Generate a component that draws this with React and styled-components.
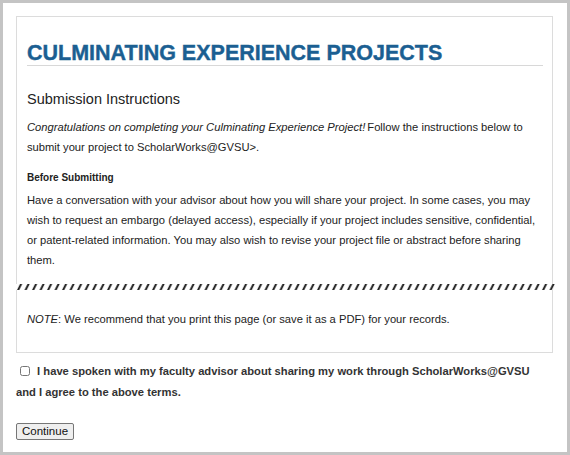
import React from 'react';
import styled, { createGlobalStyle } from 'styled-components';

const GlobalStyle = createGlobalStyle`
  html, body {
    margin: 0;
    padding: 0;
    background: #ffffff;
  }
  body {
    font-family: "Liberation Sans", Arial, sans-serif;
    color: #222;
  }
`;

const Frame = styled.div`
  box-sizing: border-box;
  width: 570px;
  height: 455px;
  border: 3px solid #c4c4c4;
  padding: 13px 0 0 13px;
  background: #fff;
`;

const Panel = styled.div`
  width: 537px;
`;

const PanelTop = styled.div`
  border: 1px solid #dcdcdc;
  border-bottom: none;
  padding: 24px 9px 14px 10px;
`;

const PanelBottom = styled.div`
  border: 1px solid #dcdcdc;
  border-top: none;
  padding: 19px 9px 23px 10px;
`;

const Heading = styled.h1`
  margin: 0;
  font-size: 21.5px;
  line-height: 24px;
  font-weight: bold;
  color: #1b5f92;
  -webkit-text-stroke: 0.4px #1b5f92;
  border-bottom: 1px solid #d8d8d8;
`;

const SubHeading = styled.h2`
  margin: 24px 0 0;
  font-size: 14.5px;
  line-height: 18px;
  font-weight: normal;
  color: #222;
`;

const Para = styled.p`
  margin: ${props => props.top || 0}px 0 0;
  font-size: 11.2px;
  line-height: 20px;
  color: #222;
`;

const Em = styled.em`
  padding-right: 2px;
`;

const SmallHead = styled.h3`
  margin: 13px 0 0;
  font-size: 10px;
  line-height: 16px;
  font-weight: bold;
  color: #222;
`;

const Tear = styled.svg`
  display: block;
  width: 539px;
  height: 6px;
`;

const Agree = styled.label`
  display: block;
  max-width: 522px;
  margin-top: 8px;
  font-size: 11.2px;
  line-height: 21px;
  font-weight: bold;
  color: #333;
`;

const Check = styled.input`
  width: 10px;
  height: 10px;
  margin: 0 4px 0 4px;
  vertical-align: -1px;
`;

const Button = styled.button`
  display: block;
  margin-top: 20px;
  height: 17px;
  padding: 0 5px;
  font-family: "Liberation Sans", Arial, sans-serif;
  font-size: 11.5px;
  line-height: 15px;
  color: #111;
  background: #efefef;
  border: 1px solid #767676;
  border-radius: 2px;
`;

function TearLine() {
  return (
    <Tear viewBox="0 0 539 6">
      <defs>
        <pattern id="dash" patternUnits="userSpaceOnUse" width="7.5" height="6">
          <polygon points="1,6 3.2,6 6.2,0 4,0" fill="#1e1e1e" />
        </pattern>
      </defs>
      <rect x="0" y="0" width="539" height="6" fill="url(#dash)" />
    </Tear>
  );
}

export default function App() {
  return (
    <>
      <GlobalStyle />
      <Frame>
        <Panel>
          <PanelTop>
            <Heading>CULMINATING EXPERIENCE PROJECTS</Heading>
            <SubHeading>Submission Instructions</SubHeading>
            <Para top={9}>
              <Em>Congratulations on completing your Culminating Experience Project!</Em>
              <span>Follow the instructions below to</span>{' '}
              <span>submit your project to ScholarWorks@GVSU&gt;.</span>
            </Para>
            <SmallHead>Before Submitting</SmallHead>
            <Para top={4}>
              Have a conversation with your advisor about how you will share your project. In
              some cases, you may wish to request an embargo (delayed access), especially if
              your project includes sensitive, confidential, or patent-related information. You
              may also wish to revise your project file or abstract before sharing them.
            </Para>
          </PanelTop>
          <TearLine />
          <PanelBottom>
            <Para>
              <em>NOTE</em>: We recommend that you print this page (or save it as a PDF) for
              your records.
            </Para>
          </PanelBottom>
          <Agree>
            <Check type="checkbox" /> I have spoken with my faculty advisor about sharing my
            work through ScholarWorks@GVSU and I agree to the above terms.
          </Agree>
          <Button type="button">Continue</Button>
        </Panel>
      </Frame>
    </>
  );
}
